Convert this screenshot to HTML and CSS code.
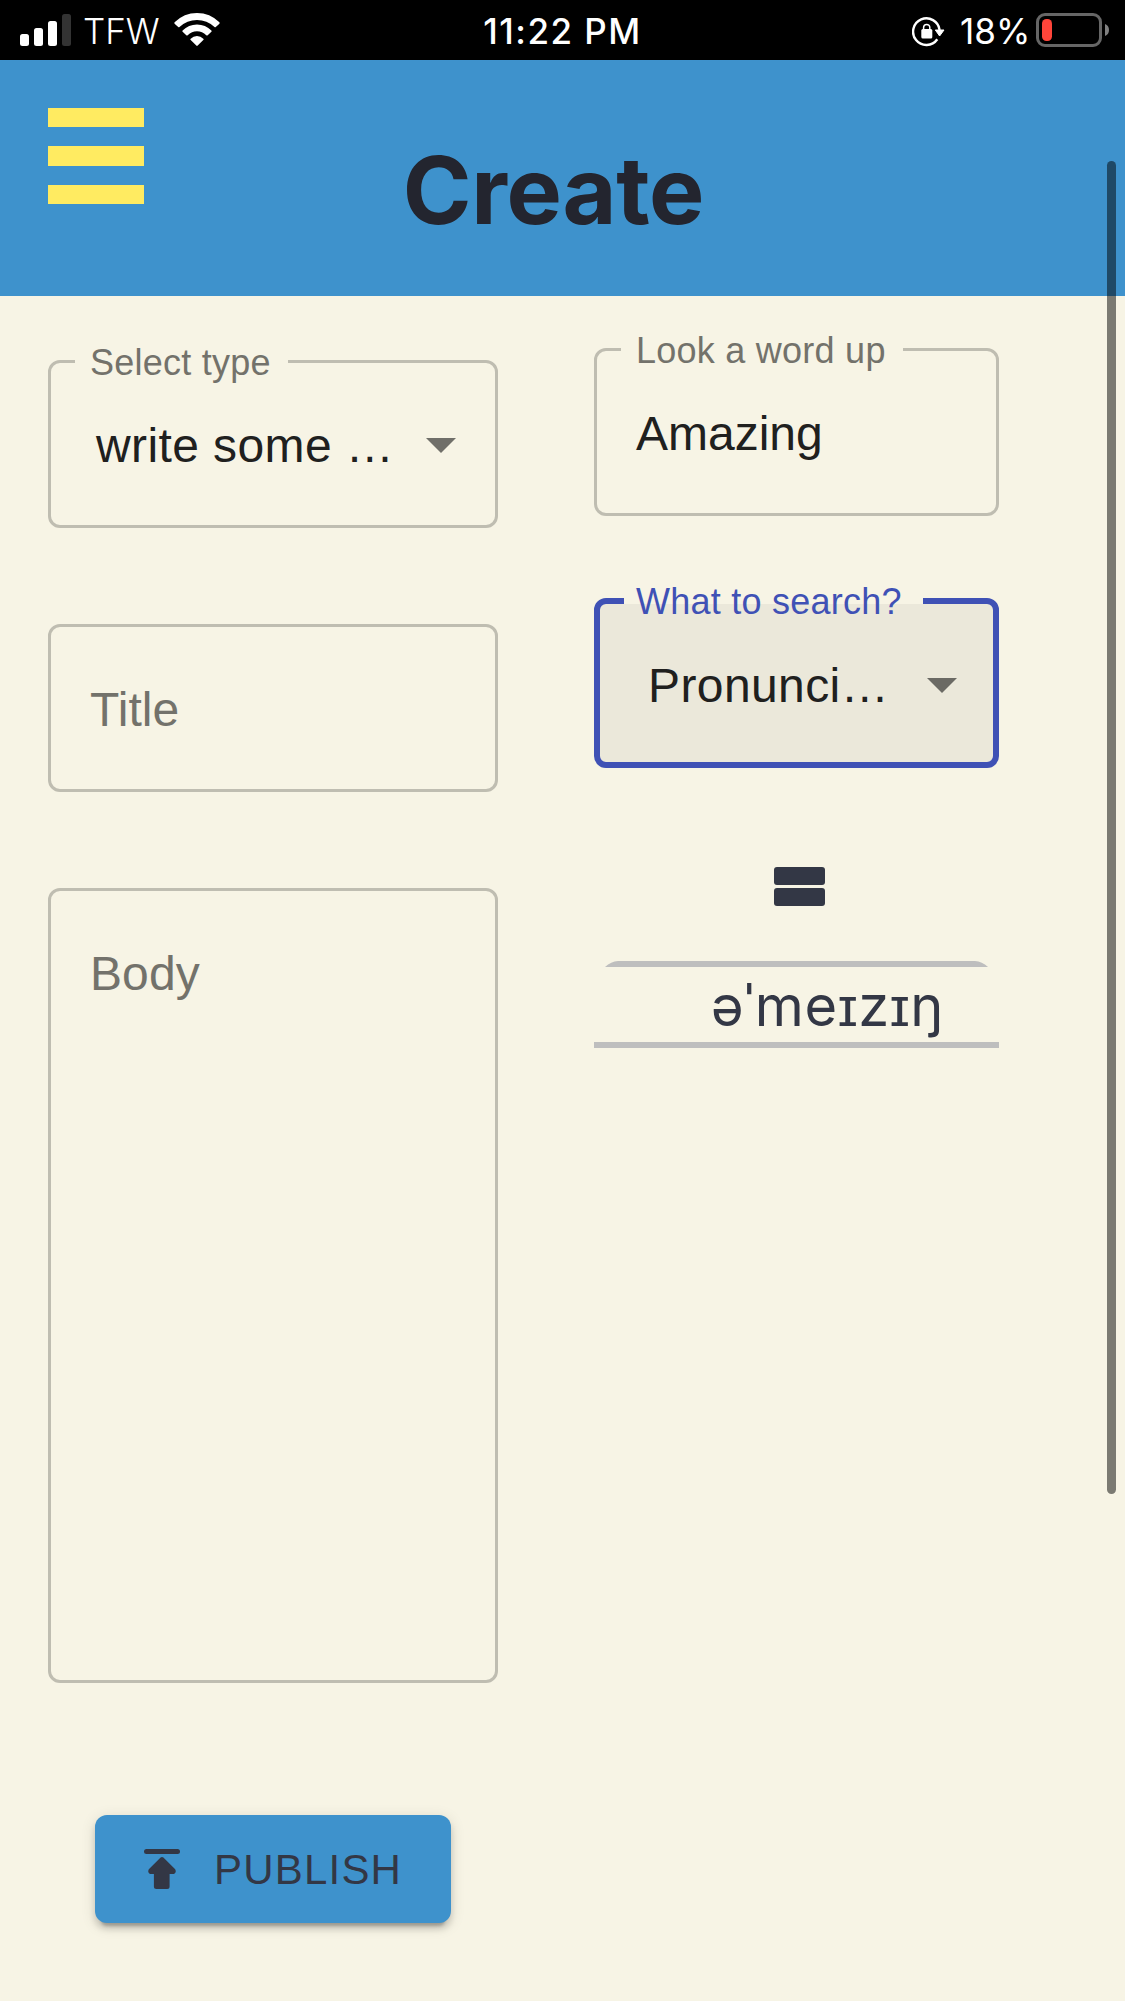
FILE: index.html
```
<!DOCTYPE html>
<html lang="en">
<head>
<meta charset="utf-8">
<title>Create</title>
<link rel="stylesheet" href="styles.css">
</head>
<body>
<div class="status">
  <div class="status-left">
    <svg class="signal" width="51" height="32" viewBox="0 0 51 32" fill="#fff">
      <rect x="0" y="20" width="9" height="12" rx="2.5"/>
      <rect x="14" y="14" width="9" height="18" rx="2.5"/>
      <rect x="28" y="7" width="9" height="25" rx="2.5"/>
      <rect x="42" y="0" width="9" height="32" rx="2.5" fill="#333"/>
    </svg>
    <span class="carrier">TFW</span>
    <svg class="wifi" width="46" height="33" viewBox="0 0 46 33" fill="#fff">
      <path d="M.6 9.3Q10 0 23 0T45.400 9.300Q46 10 45.400 10.700L41.800 14Q41.200 14.600 40.500 14Q33 7 23 7T5.500 14Q4.800 14.600 4.200 14L.6 10.700Q0 10 .6 9.300Z"/>
      <path d="M8.600 17.500Q14.500 11.500 23 11.500T37.400 17.500Q38 18.200 37.400 18.800L33.700 22.300Q33 22.900 32.300 22.300Q28.300 18.300 23 18.300T13.700 22.300Q13 22.900 12.300 22.300L8.600 18.800Q8 18.200 8.600 17.500Z"/>
      <path d="M16.700 25.700Q19.300 23 23 23T29.300 25.700Q30 26.400 29.300 27.100L23.700 32.600Q23 33.200 22.300 32.600L16.700 27.100Q16 26.400 16.700 25.700Z"/>
    </svg>
  </div>
  <div class="clock">11:22 PM</div>
  <div class="status-right">
    <svg class="rotation" width="33" height="30" viewBox="0 0 33 30" fill="none">
      <path d="M25.300 22.300A13.300 13.300 0 1 1 27.600 13" stroke="#fff" stroke-width="2.400"/>
      <path d="M23.300 13H32L27.600 19Z" fill="#fff" stroke="#fff" stroke-width="1" stroke-linejoin="round"/>
      <rect x="9.300" y="12" width="11" height="9.500" rx="1.500" fill="#fff"/>
      <path d="M11.600 13V10.500A3.100 3.100 0 0 1 17.800 10.500V13" stroke="#fff" stroke-width="1.500"/>
    </svg>
    <span class="percent">18%</span>
    <svg class="battery" width="74" height="34" viewBox="0 0 74 34">
      <rect x="1.500" y="1.500" width="63" height="31" rx="7.500" fill="none" stroke="#666" stroke-width="3"/>
      <rect x="6" y="6" width="10" height="22" rx="4.500" fill="#ff453a"/>
      <path d="M69 11A6.500 6.500 0 0 1 69 23Z" fill="#808080"/>
    </svg>
  </div>
</div>
<header class="header">
  <div class="menu"><span class="menu-bar"></span><span class="menu-bar menu-bar-mid"></span><span class="menu-bar"></span></div>
  <h1 class="title">Create</h1>
</header>
<main class="content">
  <div class="form">
    <fieldset class="field">
      <legend class="label label-type">Select type</legend>
      <div class="value value-select"><span>write some …</span><svg width="30" height="15" viewBox="0 0 30 15"><path d="M0 0H30L15 15Z" fill="#706f69"/></svg></div>
    </fieldset>
    <div class="field"><div class="value placeholder">Title</div></div>
    <div class="field field-body"><div class="value placeholder">Body</div></div>
    <button class="publish">
      <svg width="36" height="40" viewBox="0 0 36 40" fill="#333745">
        <rect width="36" height="5" rx="2.500"/>
        <path d="M16.600 8.600Q18 7.600 19.400 8.600L31.200 20.300Q32.800 23.400 30 25H25.600V37.500Q25.600 40 23.100 40H12.400Q9.900 40 9.900 37.500V25H6Q3.200 23.400 4.800 20.300Z"/>
      </svg>
      <span>PUBLISH</span>
    </button>
  </div>
  <div class="lookup">
    <fieldset class="field">
      <legend class="label label-word">Look a word up</legend>
      <div class="value value-word">Amazing</div>
    </fieldset>
    <fieldset class="field field-focused">
      <legend class="label label-search">What to search?</legend>
      <div class="value value-select"><span>Pronunci…</span><svg width="30" height="15" viewBox="0 0 30 15"><path d="M0 0H30L15 15Z" fill="#6b6a64"/></svg></div>
    </fieldset>
    <svg class="equals" width="51" height="39" viewBox="0 0 51 39" fill="#333745">
      <rect width="51" height="18" rx="3"/><rect y="21" width="51" height="18" rx="3"/>
    </svg>
    <div class="result">
      <svg class="result-top" width="405" height="6" viewBox="0 0 405 6"><path d="M11 6Q17 .5 24 0H381Q388 .5 394 6Z" fill="#bebebe"/></svg>
      <div class="phonetic">əˈmeɪzɪŋ</div>
    </div>
  </div>
</main>
<div class="scrollbar"></div>
</body>
</html>
```
FILE: styles.css
```
* { box-sizing: border-box; }
body {
  margin: 0;
  width: 1125px;
  height: 2001px;
  overflow: hidden;
  background: #f7f4e5;
  font-family: "Liberation Sans", Arial, sans-serif;
}
svg { display: block; flex: none; }

.status {
  display: grid;
  grid-template-columns: 1fr auto 1fr;
  height: 60px;
  background: #000;
  color: #fff;
  font: 400 35px/60px Inter, sans-serif;
  white-space: nowrap;
}
.status-left, .status-right { display: flex; align-items: flex-start; }
.status-left { padding-left: 20px; }
.status-right { justify-content: flex-end; padding-right: 15px; }
.signal { margin-top: 14px; }
.carrier { width: 91px; margin: 1px 0 0 12px; font-weight: 350; }
.wifi { margin-top: 13px; }
.clock { padding-top: 1px; font-weight: 550; letter-spacing: 1.5px; }
.rotation { margin: 17px 15px 0 0; }
.percent { width: 76px; padding-top: 1px; }
.battery { margin-top: 13px; }

.header {
  display: grid;
  grid-template-columns: 96px 1fr 96px;
  height: 236px;
  padding: 48px 66px 0 48px;
  background: #3e92cc;
}
.menu { display: flex; flex-direction: column; gap: 19px; }
.menu-bar { height: 19px; background: #ffeb61; }
.menu-bar-mid { height: 20px; }
.title {
  margin: 0;
  padding-top: 26px;
  color: #23252f;
  font: 700 93px/112px Inter, sans-serif;
  letter-spacing: -0.3px;
  text-align: center;
}

.content { display: flex; gap: 96px; padding: 52px 48px 0; }
.form { width: 450px; padding-top: 12px; }
.lookup { width: 405px; }

.field {
  min-width: 0;
  height: 168px;
  margin: 0 0 96px;
  padding: 0;
  border: 3px solid #bfbdb1;
  border-radius: 12px;
}
.label {
  height: 3px;
  margin-left: 24px;
  padding: 0 0 0 15px;
  color: #73726b;
  font-size: 36px;
  line-height: 5px;
  letter-spacing: 0.25px;
  white-space: nowrap;
}
.label-type { width: 213px; }
.label-word { width: 282px; }
.value {
  padding: 54px 39px 0;
  color: #20201e;
  font-size: 48px;
  line-height: 57px;
  letter-spacing: 0.4px;
  white-space: nowrap;
}
.value-select { display: flex; justify-content: space-between; padding-left: 45px; }
.value-select svg { margin-top: 21px; }
.value-word { letter-spacing: 0; }
.placeholder { color: #73726b; letter-spacing: 0.1px; }
.field-body { height: 795px; margin-bottom: 132px; }

.field-focused {
  height: 170px;
  margin: -14px 0 99px;
  border: 6px solid #3f51b5;
  background: linear-gradient(#ebe8da, #ebe8da) 0 100% / 100% 168px no-repeat border-box;
}
.label-search {
  width: 299px;
  height: 6px;
  padding-left: 12px;
  color: #3f51b5;
  line-height: 8px;
}
.field-focused .value { padding: 53px 36px 0 48px; }
.field-focused .value svg { margin-top: 21px; }

.publish {
  display: flex;
  align-items: center;
  width: 356px;
  height: 108px;
  margin-left: 47px;
  padding: 0 49px;
  border: 0;
  border-radius: 12px;
  background: #3e92cc;
  box-shadow: 0 9px 3px -6px rgba(0,0,0,.2), 0 6px 6px rgba(0,0,0,.14), 0 3px 15px rgba(0,0,0,.12);
  color: #333745;
  font: 400 42px/72px "Liberation Sans", Arial, sans-serif;
  letter-spacing: 1.2px;
}
.publish span { margin-left: 34px; padding-top: 2px; }

.equals { margin-left: 180px; }
.result { height: 87px; margin-top: 55px; border-bottom: 6px solid #bebebe; }
.phonetic {
  padding: 5px 0 0 117px;
  color: #333745;
  font: 400 56px/68px Inter, sans-serif;
  letter-spacing: 0.6px;
  white-space: nowrap;
}

/* Overlay scroll indicator floats above the page */
.scrollbar {
  position: absolute;
  top: 161px;
  left: 1107px;
  width: 9px;
  height: 1333px;
  border-radius: 5px;
  background: rgba(0,0,0,.5);
}
```
